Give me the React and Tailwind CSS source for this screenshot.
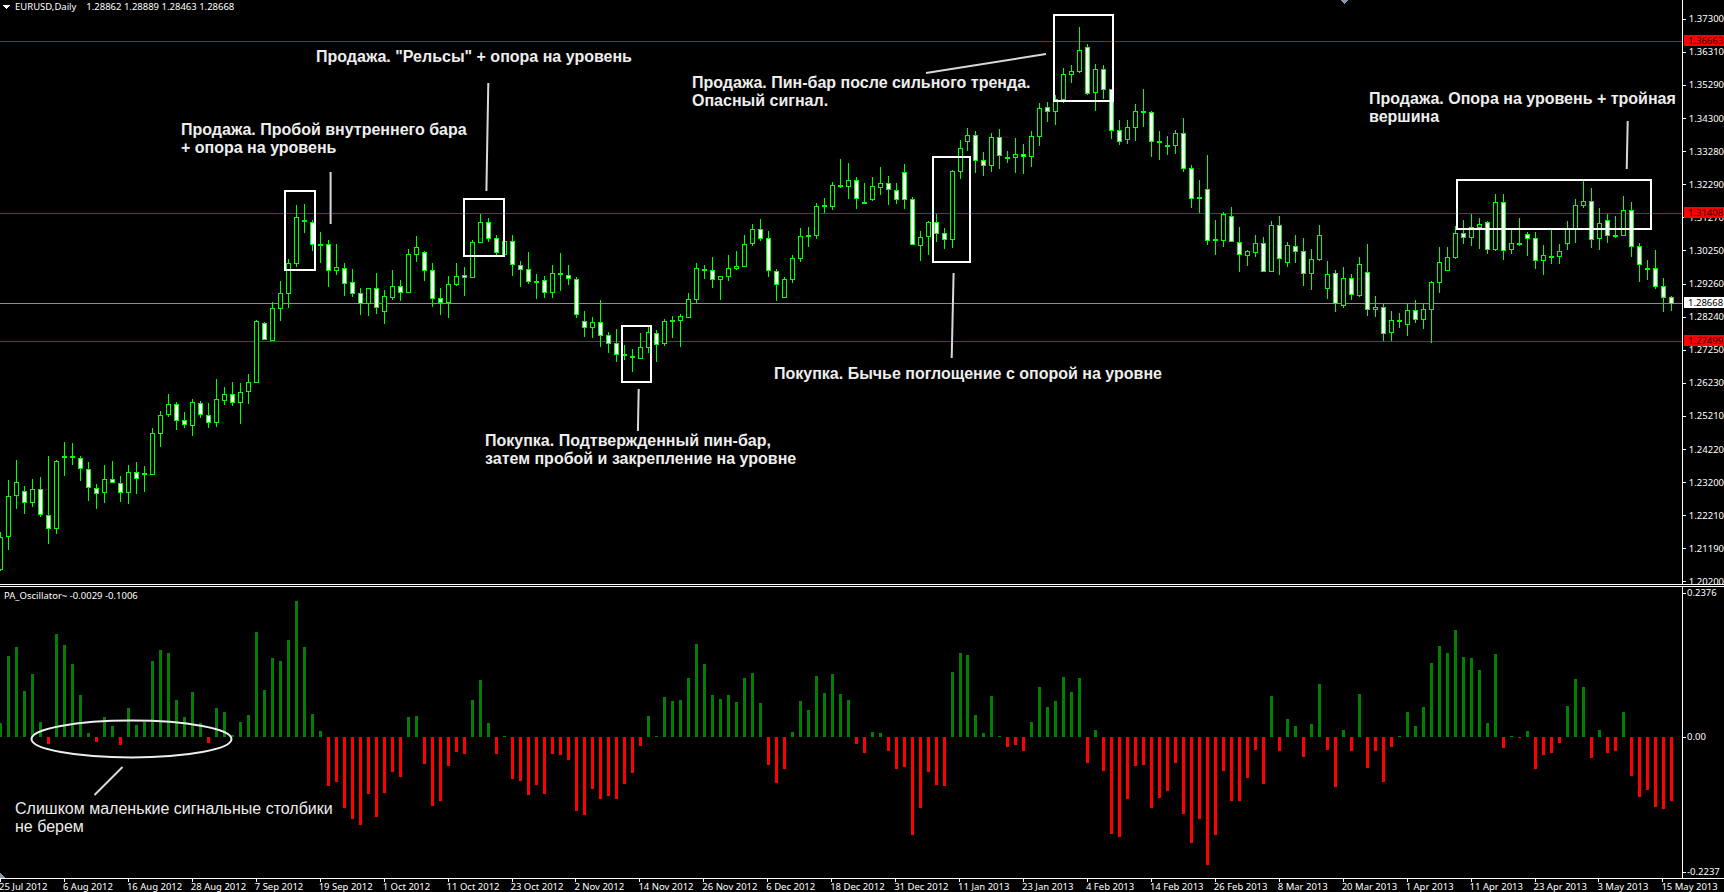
import React from "react";

// [high, body top, body bottom, low, filled] in page pixels, one row per bar
const candles = [
  [532,537,569,571,0],[480,496,536,550,0],[460,482,495,509,0],[486,491,502,514,1],[479,489,502,507,0],
  [477,489,514,517,1],[456,515,528,544,1],[460,461,528,534,0],[442,456,457,476,1],[443,456,457,465,1],
  [456,458,468,481,1],[462,469,487,501,1],[484,488,493,509,1],[465,479,492,503,0],[461,479,482,483,1],
  [476,483,492,502,1],[465,472,492,504,0],[462,472,478,494,1],[466,473,474,492,1],[428,433,474,475,0],
  [411,415,433,447,0],[394,404,414,417,0],[402,404,420,430,1],[412,420,424,428,1],[399,402,425,436,0],
  [401,403,414,418,1],[403,415,422,428,1],[379,399,422,427,0],[387,394,400,405,0],[382,394,402,406,1],
  [383,392,402,424,0],[374,382,391,404,0],[320,321,382,382,0],[322,323,339,340,1],[302,308,340,341,0],
  [281,293,308,321,0],[259,263,293,308,0],[205,217,263,267,0],[204,220,221,233,1],[220,222,244,251,1],
  [232,244,245,263,1],[240,244,270,287,1],[244,267,270,275,0],[263,268,283,296,1],[269,282,293,297,1],
  [288,293,303,315,1],[288,288,303,316,0],[273,288,307,314,1],[290,296,311,324,0],[270,286,297,300,0],
  [280,286,292,301,1],[249,254,292,293,0],[236,247,254,262,0],[251,252,270,281,1],[263,270,298,307,1],
  [288,298,302,315,1],[276,284,302,318,0],[263,276,284,286,0],[267,275,277,296,1],[240,242,277,278,0],
  [214,222,242,243,0],[218,222,238,242,1],[235,238,252,255,1],[240,241,254,256,0],[235,241,264,276,1],
  [261,265,269,287,1],[252,269,281,284,1],[274,281,282,299,1],[276,280,292,298,1],[265,273,292,298,0],
  [253,273,274,291,1],[265,275,278,285,1],[277,279,314,318,1],[311,321,327,337,1],[317,322,327,338,0],
  [300,322,335,347,1],[332,335,343,353,1],[329,343,354,362,1],[345,354,355,360,1],[349,356,357,372,1],
  [333,347,358,359,0],[327,332,347,353,0],[330,333,344,362,1],[319,321,343,346,0],[316,320,321,338,1],
  [314,316,320,347,0],[293,299,317,318,0],[263,268,299,303,0],[265,269,270,279,1],[257,270,279,288,1],
  [276,276,279,300,0],[255,268,276,281,0],[251,266,268,270,0],[235,244,266,266,0],[224,229,243,246,0],
  [219,229,238,241,1],[231,238,270,277,1],[269,271,284,301,1],[277,279,297,298,0],[255,258,279,283,0],
  [228,236,258,262,0],[227,235,236,247,1],[203,206,235,239,0],[198,205,206,213,1],[182,185,206,210,0],
  [159,185,186,188,1],[163,180,186,199,0],[177,180,198,209,1],[183,202,203,204,1],[177,186,199,201,0],
  [167,183,187,195,0],[176,183,189,205,1],[183,190,199,204,1],[164,172,199,209,1],[197,199,244,245,1],
  [231,237,245,261,0],[221,222,236,255,0],[214,222,233,242,1],[228,233,239,249,1],[170,171,239,248,0],
  [140,148,171,179,0],[128,135,141,151,0],[131,135,160,173,1],[152,160,165,176,1],[133,137,165,172,0],
  [129,137,155,169,1],[151,157,158,163,1],[138,154,157,173,0],[144,154,156,174,1],[131,136,156,167,0],
  [103,108,136,146,0],[102,107,111,122,1],[95,99,111,125,0],[68,74,99,103,0],[65,71,74,83,0],
  [27,50,71,73,0],[44,47,93,95,1],[64,69,92,111,0],[65,69,89,99,1],[89,89,130,139,1],
  [120,130,141,145,1],[120,127,139,144,0],[104,111,127,141,0],[89,111,112,127,1],[111,112,141,157,1],
  [131,141,142,160,1],[136,145,146,155,1],[130,133,145,154,0],[118,133,168,172,1],[165,168,198,208,1],
  [180,197,198,213,1],[155,189,240,245,1],[220,239,240,255,1],[212,214,240,247,0],[207,216,241,242,1],
  [227,242,254,272,1],[250,251,255,266,0],[235,243,252,257,0],[237,243,271,272,1],[221,225,271,272,0],
  [216,225,258,275,1],[242,245,262,267,0],[235,246,251,263,1],[238,251,273,286,1],[249,259,273,290,0],
  [225,235,259,261,0],[261,274,288,299,0],[270,273,303,312,1],[267,278,305,308,0],[274,278,294,300,1],
  [257,264,295,297,0],[244,272,309,316,1],[296,307,309,317,0],[304,307,333,341,1],[311,320,332,341,0],
  [313,320,321,328,1],[303,310,324,336,0],[300,310,319,323,1],[304,309,319,329,0],[281,282,309,343,0],
  [247,262,282,293,0],[247,257,270,271,0],[226,233,257,259,0],[220,233,237,244,1],[214,227,237,246,0],
  [218,224,227,249,0],[221,222,249,254,1],[194,202,249,251,0],[194,202,250,260,1],[230,243,249,254,0],
  [218,243,244,246,1],[232,234,238,256,1],[232,238,260,269,1],[245,255,260,275,0],[230,256,257,264,1],
  [244,251,256,264,0],[221,228,243,250,0],[199,205,228,243,0],[181,201,205,208,0],[188,201,239,248,1],
  [208,223,238,250,0],[214,220,235,243,1],[216,235,236,238,1],[196,210,235,236,0],[202,210,246,257,1],
  [243,246,264,282,1],[260,268,269,280,1],[250,268,286,289,1],[278,286,297,312,1],[296,297,303,311,1],
];

// bar ends as read off the pane, in thirds of a pixel from y=580
const osc = [
  429,228,201,333,282,426,492,162,195,252,345,459,486,411,438,495,384,435,426,243,
  210,219,360,411,336,429,489,384,396,465,426,405,156,330,234,243,180,63,201,402,
  453,618,606,684,717,735,642,711,639,576,591,411,408,552,678,663,558,516,522,360,
  300,429,522,468,597,603,645,615,642,522,525,540,693,705,627,657,648,657,612,579,
  498,408,468,351,363,360,294,192,252,345,357,345,366,294,279,369,555,609,567,456,
  363,390,288,339,282,342,360,492,519,456,459,513,567,561,765,684,576,615,618,276,
  219,225,405,459,348,468,501,495,513,426,321,381,363,291,336,294,549,450,573,762,
  771,657,558,555,684,654,633,549,702,789,717,855,765,573,663,663,594,510,612,348,
  513,417,438,531,432,312,510,621,450,513,342,564,513,606,501,468,396,438,381,249,
  198,219,150,231,234,270,429,222,504,468,474,453,567,525,519,489,378,297,321,534,
  450,519,513,396,588,651,630,681,687,663,
];

const prices = [
  "1.37300","1.36310","1.35290","1.34300","1.33280","1.32290","1.31270","1.30250","1.29260",
  "1.28240","1.27250","1.26230","1.25210","1.24220","1.23200","1.22210","1.21190","1.20200",
];

const dates = [
  "25 Jul 2012","6 Aug 2012","16 Aug 2012","28 Aug 2012","7 Sep 2012","19 Sep 2012","1 Oct 2012",
  "11 Oct 2012","23 Oct 2012","2 Nov 2012","14 Nov 2012","26 Nov 2012","6 Dec 2012","18 Dec 2012",
  "31 Dec 2012","11 Jan 2013","23 Jan 2013","4 Feb 2013","14 Feb 2013","26 Feb 2013","8 Mar 2013",
  "20 Mar 2013","1 Apr 2013","11 Apr 2013","23 Apr 2013","3 May 2013","15 May 2013",
];

const barX = (i) => Math.round(0.1 + 7.995 * i);

function Candle({ c, i }) {
  const [high, top, bottom, low, filled] = c;
  const x = barX(i) + 0.5;
  return (
    <g>
      <line x1={x} x2={x} y1={high} y2={low} stroke="#00ff00" />
      <rect
        x={x - 2}
        y={top + 0.5}
        width={4}
        height={Math.max(bottom - top, 1)}
        fill={filled ? "#ffffff" : "#000000"}
        stroke="#00ff00"
      />
    </g>
  );
}

function PriceRow({ label }) {
  return (
    <div className="h-[33.1px] flex items-center gap-[3px] text-white">
      <span className="w-[3px] h-px bg-white" />
      <span>{label}</span>
    </div>
  );
}

function OscLabel({ label, className }) {
  return (
    <div className={`h-[12px] flex items-center gap-px text-white ${className}`}>
      <span className="w-[3px] h-px bg-white" />
      <span>{label}</span>
    </div>
  );
}

const tagClass = "absolute left-px w-[41px] h-[11px] pl-[4px] flex items-center";
const noteClass = "absolute text-[16px] leading-[18px] font-['Liberation_Sans',sans-serif] font-bold text-[#eeeeee] whitespace-nowrap";

export default function App() {
  return (
    <div className="w-[1724px] h-[892px] bg-black overflow-hidden flex flex-col text-[9.5px] leading-[12px] font-['Noto_Sans',sans-serif] text-white">
      {/* Price chart */}
      <div className="h-[584px] flex shrink-0 overflow-hidden">
        <div className="relative w-[1682px] h-full">
          <svg width="1682" height="584" className="block" shapeRendering="crispEdges">
            <polygon points="3,5 10,5 6.5,9" fill="#ffffff" />
            <polygon points="1340,0 1348,0 1344,4" fill="#8a97a8" />
            <line x1="0" x2="1682" y1="41.5" y2="41.5" stroke="#e10000" />
            <line x1="0" x2="1682" y1="213.5" y2="213.5" stroke="#e10000" />
            <line x1="0" x2="1682" y1="341.5" y2="341.5" stroke="#e10000" />
            <line x1="0" x2="1682" y1="303.5" y2="303.5" stroke="#8c8c8c" />
            {candles.map((c, i) => (
              <Candle key={i} c={c} i={i} />
            ))}
            <g fill="none" stroke="#ffffff" strokeWidth="2">
              <rect x="285" y="191" width="30" height="79" />
              <rect x="464" y="199" width="40" height="57" />
              <rect x="622" y="326" width="29" height="56" />
              <rect x="933" y="157" width="37" height="105" />
              <rect x="1054" y="15" width="59" height="86" />
              <rect x="1457" y="180" width="194" height="49" />
            </g>
            <g stroke="#d8d8d8" strokeWidth="2" shapeRendering="auto">
              <line x1="330.6" y1="172" x2="330.6" y2="224" />
              <line x1="488.3" y1="83" x2="486.4" y2="191" />
              <line x1="926" y1="73" x2="1046" y2="54" />
              <line x1="638.7" y1="389" x2="637.9" y2="431" />
              <line x1="953.6" y1="273" x2="951.7" y2="358" />
              <line x1="1627.7" y1="121" x2="1626.7" y2="169" />
            </g>
          </svg>

          <div className="absolute left-[15px] top-px whitespace-pre">EURUSD,Daily    1.28862 1.28889 1.28463 1.28668</div>

          <p className={`${noteClass} left-[181px] top-[121px]`}>
            Продажа. Пробой внутреннего бара
            <br />+ опора на уровень
          </p>
          <p className={`${noteClass} left-[316px] top-[48px]`}>
            Продажа. "Рельсы" + опора на уровень
          </p>
          <p className={`${noteClass} left-[692px] top-[74px]`}>
            Продажа. Пин-бар после сильного тренда.
            <br />Опасный сигнал.
          </p>
          <p className={`${noteClass} left-[485px] top-[432px]`}>
            Покупка. Подтвержденный пин-бар,
            <br />затем пробой и закрепление на уровне
          </p>
          <p className={`${noteClass} left-[774px] top-[365px]`}>
            Покупка. Бычье поглощение с опорой на уровне
          </p>
          <p className={`${noteClass} left-[1369px] top-[90px]`}>
            Продажа. Опора на уровень + тройная
            <br />вершина
          </p>
        </div>

        {/* Price axis */}
        <div className="relative w-[42px] h-full border-l border-white pt-[2.75px]">
          {prices.map((p) => (
            <PriceRow key={p} label={p} />
          ))}
          <div className={`${tagClass} top-[35px] bg-[#ff0000] text-[#200000]`}>1.36663</div>
          <div className={`${tagClass} top-[207px] bg-[#ff0000] text-[#200000]`}>1.31408</div>
          <div className={`${tagClass} top-[297px] bg-white text-black`}>1.28668</div>
          <div className={`${tagClass} top-[335px] bg-[#ff0000] text-[#200000]`}>1.27499</div>
        </div>
      </div>

      <div className="h-[3px] shrink-0 border-y border-white" />

      {/* Oscillator */}
      <div className="h-[291px] flex shrink-0">
        <div className="relative w-[1682px] h-full">
          <svg width="1682" height="291" viewBox="0 587 1682 291" className="block" shapeRendering="crispEdges">
            {osc.map((v, i) => {
              const end = Math.round(580 + v / 3);
              const up = end < 737;
              return (
                <rect
                  key={i}
                  x={barX(i) - 1}
                  y={up ? end : 737}
                  width={3}
                  height={Math.max(Math.abs(end - 737), 1)}
                  fill={up ? "#008000" : "#ff0000"}
                />
              );
            })}
            <polygon points="0,873 0,878 5,878" fill="#8a97a8" />
            <ellipse cx="131.5" cy="739" rx="100" ry="18.5" fill="none" stroke="#eeeeee" strokeWidth="2" shapeRendering="auto" />
            <line x1="122.5" y1="767" x2="94.5" y2="795" stroke="#d8d8d8" strokeWidth="2" shapeRendering="auto" />
          </svg>

          <div className="absolute left-[4px] top-[3px]">PA_Oscillator~ -0.0029 -0.1006</div>

          <p className="absolute left-[15px] top-[213px] text-[16px] leading-[18px] font-['Liberation_Sans',sans-serif] text-[#eeeeee] whitespace-nowrap">
            Слишком маленькие сигнальные столбики
            <br />не берем
          </p>
        </div>

        <div className="w-[42px] h-full border-l border-white">
          <OscLabel label="0.2376" />
          <OscLabel label="0.00" className="mt-[132px]" />
          <OscLabel label="-0.2237" className="mt-[123px]" />
        </div>
      </div>

      {/* Time axis */}
      <div className="flex-1 border-t border-white flex">
        {dates.map((d) => (
          <div key={d} className="w-[63.95px] shrink-0">
            <span className="block w-px h-[3px] bg-white" />
            <span className="block -ml-px -mt-px whitespace-nowrap">{d}</span>
          </div>
        ))}
      </div>
    </div>
  );
}
